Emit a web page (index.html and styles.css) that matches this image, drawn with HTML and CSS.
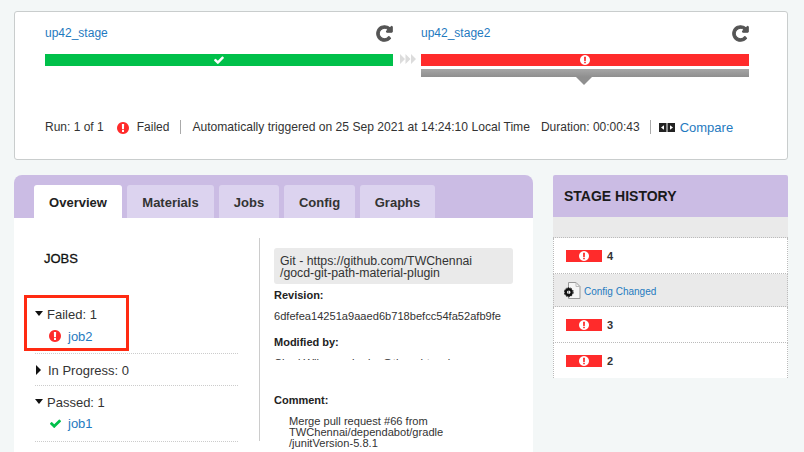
FILE: index.html
```html
<!DOCTYPE html>
<html lang="en">
<head>
<meta charset="utf-8">
<title>Stage details</title>
<link rel="stylesheet" href="styles.css">
</head>
<body>
<svg class="defs" width="0" height="0" aria-hidden="true">
  <symbol id="alert" viewBox="128 128 1536 1536">
    <path fill="currentColor" fill-rule="evenodd" d="M896 128q209 0 385.500 103t279.500 279.500 103 385.500-103 385.500-279.500 279.500-385.500 103-385.500-103-279.500-279.500-103-385.500 103-385.500 279.500-279.500 385.500-103zm128 1247v-190q0-14-9-23.500t-22-9.500h-192q-13 0-23 10t-10 23v190q0 13 10 23t23 10h192q13 0 22-9.500t9-23.500zm-2-344l18-621q0-12-10-18-10-8-24-8h-220q-14 0-24 8-10 6-10 18l17 621q0 10 10 17.500t24 7.500h185q14 0 23.500-7.500t10.500-17.500z"/>
  </symbol>
  <symbol id="refresh" viewBox="60 60 1672 1672">
    <path fill="currentColor" stroke="currentColor" stroke-width="100" stroke-linejoin="round" d="M1664 256v448q0 26-19 45t-45 19h-448q-42 0-59-40-17-39 14-69l138-138q-148-137-349-137-104 0-198.500 40.500t-163.500 109.500-109.500 163.500-40.500 198.500 40.500 198.500 109.500 163.500 163.500 109.500 198.500 40.500q119 0 225-52t179-147q7-10 23-12 15 0 25 9l137 138q9 8 9.500 20.500t-7.500 22.500q-109 132-264 204.500t-327 72.500q-156 0-298-61t-245-164-164-245-61-298 61-298 164-245 245-164 298-61q147 0 284.500 55.500t244.500 156.500l130-129q29-31 70-14 39 17 39 59z"/>
  </symbol>
  <symbol id="check" viewBox="121 270 1550 1252">
    <path fill="currentColor" d="M1671 566q0 40-28 68l-724 724-136 136q-28 28-68 28t-68-28l-136-136-362-362q-28-28-28-68t28-68l136-136q28-28 68-28t68 28l294 295 656-657q28-28 68-28t68 28l136 136q28 28 28 68z"/>
  </symbol>
</svg>

<section class="run-card">
  <div class="stages">
    <div class="stage stage-first">
      <div class="stage-head">
        <a class="link" href="#">up42_stage</a>
        <svg class="refresh"><use href="#refresh"/></svg>
      </div>
      <div class="bar bar-pass"><svg class="bar-check"><use href="#check"/></svg></div>
    </div>
    <div class="flow-arrows">
      <svg width="16" height="10" viewBox="0 0 16 10"><path d="M0 0L5 5L0 10ZM5.500 0L10.500 5L5.500 10ZM11 0L16 5L11 10Z" fill="#dcdcdc"/></svg>
    </div>
    <div class="stage stage-second">
      <div class="stage-head">
        <a class="link" href="#">up42_stage2</a>
        <svg class="refresh"><use href="#refresh"/></svg>
      </div>
      <div class="bar bar-fail"><svg class="bar-alert"><use href="#alert"/></svg></div>
      <div class="selected-bar"></div>
    </div>
  </div>
  <div class="run-info">
    <span class="run-count">Run: 1 of 1</span>
    <svg class="alert-icon"><use href="#alert"/></svg>
    <span class="run-status">Failed</span>
    <span class="run-trigger">Automatically triggered on 25 Sep 2021 at 14:24:10 Local Time</span>
    <span class="run-duration">Duration: 00:00:43</span>
    <span class="run-compare">
      <svg class="compare-icon" width="16" height="9" viewBox="0 0 16 9">
        <rect width="7.500" height="9" fill="#222"/><rect x="8.500" width="7.500" height="9" fill="#222"/>
        <path d="M2 4.500L5 2.200V6.800ZM14 4.500L11 2.200V6.800Z" fill="#fff"/>
      </svg>
      <a class="link compare-link" href="#">Compare</a>
    </span>
  </div>
</section>

<div class="lower">
  <main class="panel">
    <nav class="tabs">
      <a class="tab tab-overview active" href="#">Overview</a>
      <a class="tab tab-materials" href="#">Materials</a>
      <a class="tab tab-jobs" href="#">Jobs</a>
      <a class="tab tab-config" href="#">Config</a>
      <a class="tab tab-graphs" href="#">Graphs</a>
    </nav>
    <div class="panel-body">
      <div class="jobs-col">
        <h2 class="jobs-title">JOBS</h2>
        <div class="job-group group-failed">
          <div class="group-label"><span class="tri-down"></span>Failed: 1</div>
          <div class="job-row"><svg class="alert-icon"><use href="#alert"/></svg><a class="link" href="#">job2</a></div>
        </div>
        <div class="job-group group-progress">
          <div class="group-label"><span class="tri-right"></span>In Progress: 0</div>
        </div>
        <div class="job-group group-passed">
          <div class="group-label"><span class="tri-down"></span>Passed: 1</div>
          <div class="job-row"><svg class="check-icon"><use href="#check"/></svg><a class="link" href="#">job1</a></div>
        </div>
        <div class="highlight-box"></div>
      </div>
      <div class="material-col">
        <div class="material-name">Git - https://github.com/TWChennai<br>/gocd-git-path-material-plugin</div>
        <h3 class="material-label label-revision">Revision:</h3>
        <p class="material-value">6dfefea14251a9aaed6b718befcc54fa52afb9fe</p>
        <h3 class="material-label label-modified">Modified by:</h3>
        <div class="modified-clip"><p class="material-value">Chad Wilson &lt;chad.w@thoughtworks</p></div>
        <h3 class="material-label label-comment">Comment:</h3>
        <p class="comment">Merge pull request #66 from<br>TWChennai/dependabot/gradle<br>/junitVersion-5.8.1</p>
      </div>
    </div>
  </main>

  <aside class="history">
    <h2 class="history-title">STAGE HISTORY</h2>
    <div class="history-strip"></div>
    <div class="history-row"><span class="mini-bar"><svg class="mini-alert"><use href="#alert"/></svg></span><b>4</b></div>
    <div class="history-row config-row">
      <svg class="config-icon" width="17" height="17" viewBox="0 0 17 17">
        <path d="M4.500 0.500H12L16 4.500V16.500H4.500Z" fill="#f6f6f6" stroke="#999"/>
        <path d="M12 0.500V4.500H16" fill="none" stroke="#bbb"/>
        <circle cx="4.700" cy="10.200" r="3" fill="none" stroke="#111" stroke-width="2.400"/>
        <circle cx="4.700" cy="10.200" r="4.500" fill="none" stroke="#111" stroke-width="1" stroke-dasharray="1.600 1.200"/>
      </svg>
      <a class="link config-link" href="#">Config Changed</a>
    </div>
    <div class="history-row"><span class="mini-bar"><svg class="mini-alert"><use href="#alert"/></svg></span><b>3</b></div>
    <div class="history-row"><span class="mini-bar"><svg class="mini-alert"><use href="#alert"/></svg></span><b>2</b></div>
  </aside>
</div>
</body>
</html>
```

FILE: styles.css
```css
* { box-sizing: border-box; }
html, body { margin: 0; height: 452px; overflow: hidden; }
body {
  background: #f3f7f7;
  padding: 11px 16px 0 14px;
  font-family: "Liberation Sans", Arial, sans-serif;
  font-size: 12px;
  color: #333;
}
.defs { position: absolute; }
.link { color: #1f7ac0; text-decoration: none; }
h2, h3, p { margin: 0; }

.run-card {
  height: 149px;
  background: #fff;
  border: 1px solid #c9cdcd;
  border-radius: 3px;
  padding: 13px 0 0 30px;
}
.stages { display: flex; height: 95px; }
.stage-first { width: 348px; }
.stage-second { width: 328px; }
.flow-arrows { width: 28px; padding: 29px 0 0 7px; }
.flow-arrows svg { display: block; }
.stage-head {
  display: flex;
  justify-content: space-between;
  height: 29px;
}
.stage-head .link { line-height: 17px; }
.refresh { width: 17px; height: 17px; color: #555; }
.bar {
  height: 12px;
  display: flex;
  align-items: center;
  justify-content: center;
}
.bar-pass { background: #00c04a; }
.bar-fail { background: #ff2b2b; }
.bar-check { width: 10px; height: 8px; color: #fff; }
.bar-alert { width: 10px; height: 10px; color: #fff; }
.selected-bar {
  position: relative;
  height: 8px;
  margin-top: 3px;
  background: linear-gradient(#a6a6a6, #8f8f8f);
}
.selected-bar::after {
  content: "";
  position: absolute;
  left: 155px;
  top: 8px;
  border-left: 8px solid transparent;
  border-right: 8px solid transparent;
  border-top: 8px solid #8f8f8f;
}
.run-info {
  display: flex;
  align-items: center;
  height: 14px;
  line-height: 14px;
  white-space: nowrap;
}
.alert-icon { width: 12px; height: 12px; color: #ff2b2b; flex: none; }
.run-info .alert-icon { margin: 1px 0 0 13px; }
.run-status { margin-left: 8px; padding-right: 11px; border-right: 1px solid #aaa; }
.run-trigger { margin-left: 11px; font-size: 12.1px; }
.run-duration { margin-left: 11px; padding-right: 10px; border-right: 1px solid #aaa; }
.run-compare { display: flex; align-items: center; margin-left: 8px; }
.compare-link { font-size: 13px; margin-left: 5px; padding-top: 1px; }

.lower { display: flex; margin-top: 15px; }
.panel { width: 519px; height: 277px; }
.tabs {
  display: flex;
  gap: 5px;
  height: 43px;
  padding: 10px 0 0 20px;
  background: #cbbce4;
  border-radius: 8px 8px 0 0;
}
.tab {
  height: 33px;
  line-height: 35px;
  text-align: center;
  font-weight: bold;
  font-size: 13px;
  color: #333;
  text-decoration: none;
  background: #dcd3ef;
  border-radius: 3px 3px 0 0;
}
.tab-overview { width: 88px; }
.tab-materials { width: 87px; }
.tab-jobs { width: 60px; }
.tab-config { width: 71px; }
.tab-graphs { width: 75px; }
.tab.active { background: #fff; color: #222; }

.panel-body {
  display: flex;
  height: 234px;
  background: #fff;
  padding-top: 20px;
}
.jobs-col {
  position: relative;
  width: 246px;
  height: 203px;
  padding-left: 21px;
  border-right: 1px solid #ccc;
  font-size: 13px;
}
.jobs-title {
  font-size: 13px;
  font-weight: normal;
  color: #111;
  -webkit-text-stroke: 0.3px #111;
  line-height: 15px;
  margin: 13px 0 0 9px;
  height: 43px;
}
.job-group { width: 203px; border-bottom: 1px dotted #ccc; }
.group-failed { height: 60px; padding-top: 14px; }
.group-progress { height: 32px; padding-top: 10px; }
.group-passed { height: 56px; padding-top: 10px; }
.group-label { display: flex; align-items: center; height: 14px; line-height: 14px; }
.tri-down {
  width: 0; height: 0;
  margin: -3px 4px 0 0;
  border-left: 4.500px solid transparent;
  border-right: 4.500px solid transparent;
  border-top: 5px solid #111;
}
.tri-right {
  width: 0; height: 0;
  margin: -2px 7px 0 1px;
  border-top: 5px solid transparent;
  border-bottom: 5px solid transparent;
  border-left: 5px solid #111;
}
.job-row { display: flex; align-items: center; height: 14px; margin-top: 6px; padding-left: 14px; }
.group-failed .job-row { margin-top: 7px; }
.job-row .link { margin-left: 7px; }
.check-icon { width: 11px; height: 9px; margin-left: 1px; color: #00c04a; flex: none; }
.highlight-box {
  position: absolute;
  left: 10px;
  top: 57px;
  width: 105px;
  height: 56px;
  border: 3px solid #ff2a12;
}

.material-col { width: 239px; margin-left: 14px; }
.material-name {
  height: 36px;
  padding: 7px 0 0 6px;
  margin-top: 10px;
  background: #eaeaea;
  border-radius: 3px;
  font-size: 12.3px;
  line-height: 12px;
  white-space: nowrap;
}
.material-label { font-size: 11px; line-height: 13px; color: #222; }
.label-revision { margin-top: 5px; }
.material-value { font-size: 11.100px; line-height: 13px; margin-top: 8px; white-space: nowrap; }
.label-modified { margin-top: 13px; }
.modified-clip { height: 11px; overflow: hidden; }
.modified-clip .material-value { margin-top: 8px; }
.label-comment { margin-top: 34px; }
.comment { margin: 9px 0 0 15px; font-size: 11.100px; line-height: 11px; white-space: nowrap; }

.history { width: 235px; margin-left: 20px; height: 203px; }
.history-title {
  height: 42px;
  padding-left: 11px;
  background: #cbbce4;
  border-radius: 2px 2px 0 0;
  font-size: 14px;
  line-height: 42px;
  color: #1a1a1a;
}
.history-strip { height: 21px; background: #eaeaea; border-bottom: 1px dotted #bbb; }
.history-row {
  display: flex;
  align-items: center;
  height: 36px;
  padding-left: 12px;
  background: #fff;
  border-left: 1px dotted #bbb;
  border-right: 1px dotted #bbb;
  border-bottom: 1px dotted #bbb;
  font-size: 11px;
}
.history-row:last-child { border-bottom: 0; height: 35px; }
.mini-bar {
  display: flex;
  align-items: center;
  justify-content: center;
  width: 36px;
  height: 12px;
  margin-right: 5px;
  background: #ff2b2b;
}
.mini-alert { width: 10px; height: 10px; color: #fff; }
.config-row { height: 33px; padding-left: 10px; background: #eaeaea; }
.config-icon { flex: none; }
.config-link { font-size: 10px; margin-left: 3px; padding-top: 2px; }
```
